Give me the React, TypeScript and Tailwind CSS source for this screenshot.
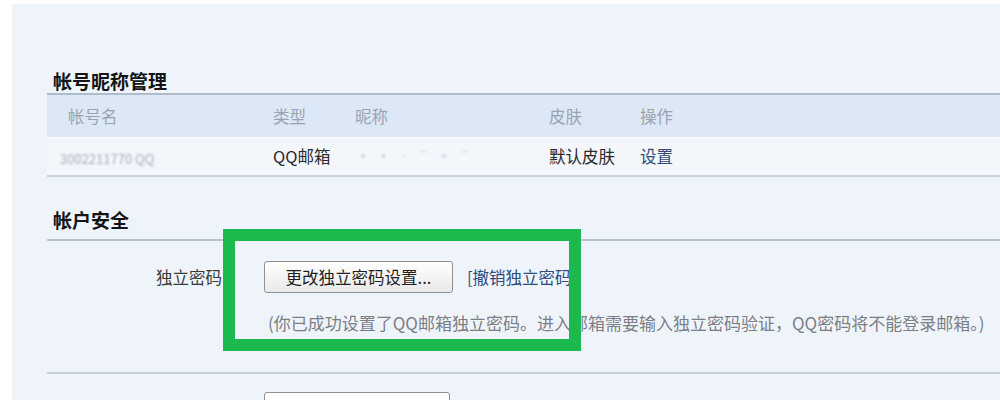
export default function App() {
  const font = { fontFamily: '"Noto Sans CJK SC", "Noto Sans", sans-serif' };
  return (
    <div className="w-[1000px] h-[400px] overflow-hidden bg-white pl-3 pt-1" style={font}>
      <div className="relative h-[396px] bg-[#eff4fb] pl-[35px]">
        {/* 帐号昵称管理 */}
        <h2 className="pt-[64px] pl-[6px] text-[19px] leading-[25px] font-bold text-[#151515]">帐号昵称管理</h2>
        <div className="border-t-2 border-[#aebccb]">
          <div className="grid grid-cols-[205px_82px_194px_91px_1fr] h-[42px] items-center bg-[#dce8f5] pl-[21px] text-[16.5px] text-[#9aa4b0]">
            <span>帐号名</span>
            <span>类型</span>
            <span>昵称</span>
            <span>皮肤</span>
            <span>操作</span>
          </div>
          <div className="grid grid-cols-[205px_82px_194px_91px_1fr] h-[40px] items-center border-t border-[#f8fafd] border-b-2 border-b-[#c9d1db] bg-[#f3f6fb] pl-[21px] text-[16.5px] text-[#2a2a2a]">
            <span className="-ml-[8px] pt-[4px] text-[13px] text-[#8a929b] opacity-70 blur-[1px]">3002211770 QQ</span>
            <span>QQ邮箱</span>
            <span className="text-[#c9d0d8] blur-[1px]">· · ‐ ˉ · ˉ</span>
            <span>默认皮肤</span>
            <span className="text-[#2f4b76]">设置</span>
          </div>
        </div>

        {/* 帐户安全 */}
        <h2 className="mt-[30px] pl-[6px] text-[19px] leading-[25px] font-bold text-[#151515]">帐户安全</h2>
        <div className="mt-[7px] border-t-2 border-[#b8c3cf] pt-[20px]">
          <div className="flex items-center">
            <span className="w-[175px] text-right text-[16.5px] text-[#3a3a3a]">独立密码</span>
            <button className="ml-[42px] h-[32px] w-[189px] rounded-[3px] border border-[#8f9092] bg-gradient-to-b from-white to-[#e9e9e9] text-[16.5px] text-[#1e1e1e]">
              更改独立密码设置...
            </button>
            <span className="ml-[14px] text-[16.5px] text-[#2d4c80]">[撤销独立密码]</span>
          </div>
          <p className="mt-[16px] pl-[221px] text-[17px] leading-[28px] text-[#7b7f85] whitespace-nowrap">
            (你已成功设置了QQ邮箱独立密码。进入邮箱需要输入独立密码验证，QQ密码将不能登录邮箱。)
          </p>
        </div>
        <div className="mt-[35px] border-t-2 border-[#c7cfd8] pt-[18px]">
          <div className="flex items-start">
            <span className="w-[175px]" />
            <div className="ml-[42px] h-[32px] w-[186px] rounded-[3px] border border-[#8f9092] bg-white" />
          </div>
        </div>

        {/* green highlight */}
        <div className="absolute left-[211px] top-[225px] h-[122px] w-[358px] border-[12px] border-[#1cb94f]" />
      </div>
    </div>
  );
}
